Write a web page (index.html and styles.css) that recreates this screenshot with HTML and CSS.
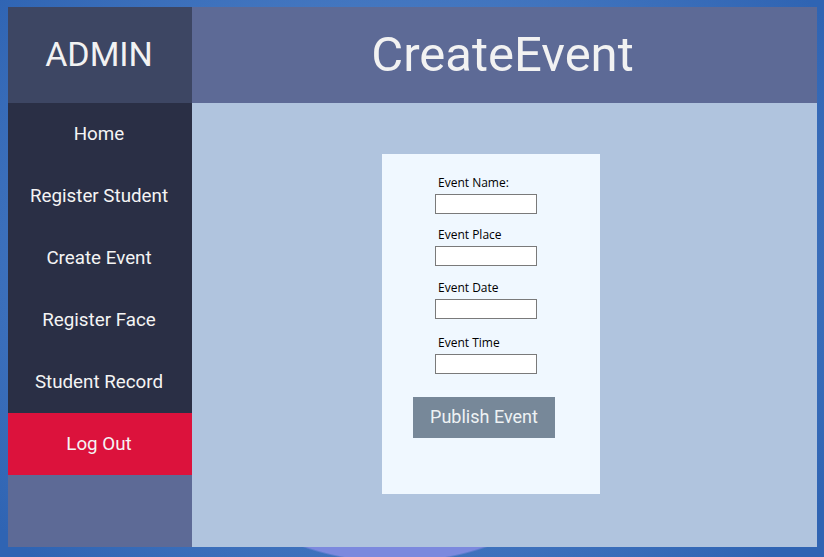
FILE: index.html
```html
<!DOCTYPE html>
<html>
<head>
<meta charset="utf-8">
<link rel="stylesheet" href="styles.css">
</head>
<body>
<div class="window">
  <div class="brand">ADMIN</div>
  <div class="topbar"><h1>CreateEvent</h1></div>
  <nav class="sidebar">
    <div class="nav-item">Home</div>
    <div class="nav-item">Register Student</div>
    <div class="nav-item">Create Event</div>
    <div class="nav-item">Register Face</div>
    <div class="nav-item">Student Record</div>
    <div class="nav-item logout">Log Out</div>
    <div class="nav-fill"></div>
  </nav>
  <main class="content">
    <form class="card">
      <div class="field name">
        <label>Event Name:</label>
        <input type="text">
      </div>
      <div class="field place">
        <label>Event Place</label>
        <input type="text">
      </div>
      <div class="field date">
        <label>Event Date</label>
        <input type="text">
      </div>
      <div class="field time">
        <label>Event Time</label>
        <input type="text">
      </div>
      <button type="button" class="publish">Publish Event</button>
    </form>
  </main>
</div>
</body>
</html>
```
FILE: styles.css
```css
html, body {
  margin: 0;
  padding: 0;
  width: 824px;
  height: 557px;
  overflow: hidden;
}
body {
  background:
    radial-gradient(circle 282px at 395px -259px, #7c89de 0, #7c89de 99.3%, rgba(124,137,222,0) 100%) 0 540px / 824px 17px no-repeat,
    radial-gradient(ellipse 520px 420px at 400px 260px, #4e81c9 0%, #4679c2 55%, #2f64b3 100%);
  font-family: "Roboto", "Open Sans", sans-serif;
}
.window {
  margin: 7px 0 0 8px;
  width: 809px;
  height: 540px;
  display: grid;
  grid-template-columns: 184px 1fr;
  grid-template-rows: 96px 1fr;
}
.brand {
  background: #3d4663;
  color: #f2f2f2;
  font-size: 34px;
  display: flex;
  align-items: center;
  justify-content: center;
  padding: 0 2px 2px 0;
}
.topbar {
  background: #5d6a96;
  display: flex;
  align-items: center;
  justify-content: center;
}
.topbar h1 {
  margin: 0 4px 2px 0;
  font-weight: 400;
  font-size: 49px;
  color: #f2f2f2;
}
.sidebar {
  display: flex;
  flex-direction: column;
  background: #2a2f45;
}
.nav-item {
  height: 62px;
  display: flex;
  align-items: center;
  justify-content: center;
  color: #f4f4f4;
  font-size: 18.8px;
  padding: 0 2px 1px 0;
  box-sizing: border-box;
}
.logout {
  background: #dc123c;
}
.nav-fill {
  flex: 1;
  background: #5d6a96;
}
.content {
  background: #b0c4de;
  padding: 51px 0 0 190px;
}
.card {
  width: 218px;
  height: 340px;
  background: #f0f8ff;
  box-sizing: border-box;
  padding: 22px 0 0 53px;
  margin: 0;
  font-family: "Open Sans", "Liberation Sans", sans-serif;
}
.field {
  display: flex;
  flex-direction: column;
}
.field label {
  font-size: 12px;
  color: #000;
  padding-left: 3px;
  height: 18px;
  line-height: 14px;
}
.field input {
  width: 102px;
  height: 20px;
  box-sizing: border-box;
  border: 1px solid #7a7a7a;
  background: #fff;
  margin: 0;
  padding: 0;
}
.field.place { margin-top: 14px; }
.field.date { margin-top: 15px; }
.field.time { margin-top: 17px; }
.publish {
  display: block;
  margin: 23px 0 0 -22px;
  width: 142px;
  height: 41px;
  background: #778899;
  border: none;
  color: #eef2f4;
  font-family: "Roboto", "Open Sans", sans-serif;
  font-size: 18px;
  padding: 0 0 2px 0;
}
```
